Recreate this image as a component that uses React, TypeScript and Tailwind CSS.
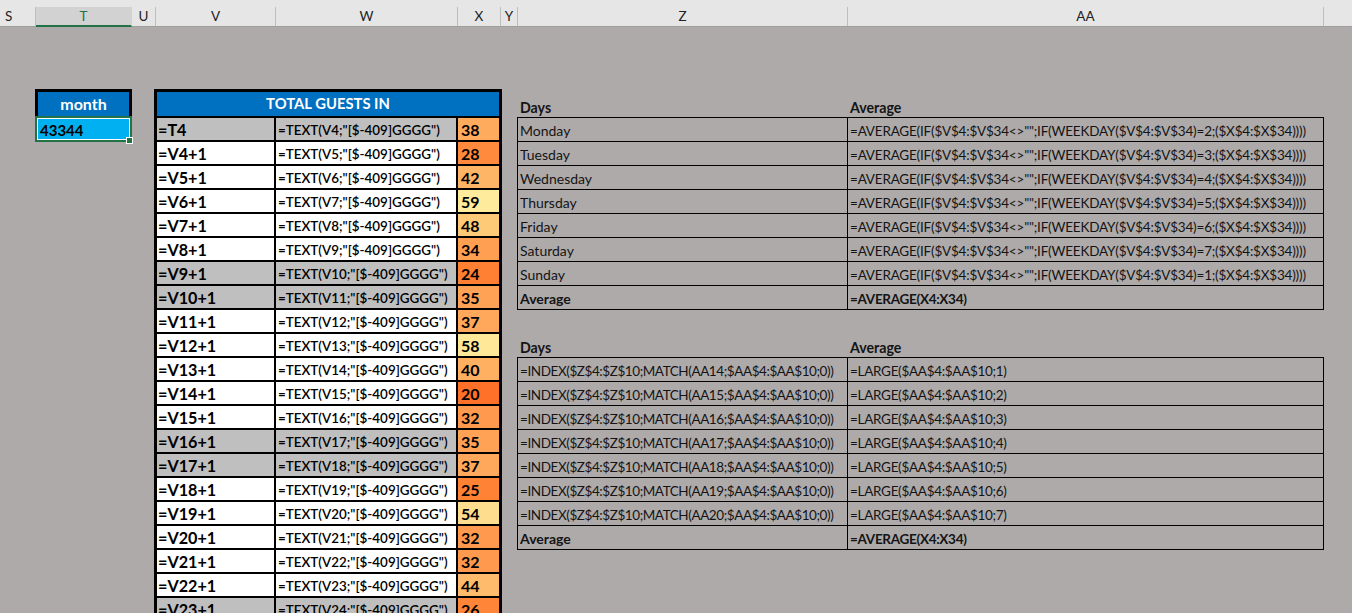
const cols = [
  { l: "S", w: "w-[36px] justify-start pl-[5px]" },
  { l: "T", w: "w-[96px] justify-center", sel: true },
  { l: "U", w: "w-[24px] justify-center" },
  { l: "V", w: "w-[120px] justify-center" },
  { l: "W", w: "w-[182px] justify-center" },
  { l: "X", w: "w-[43px] justify-center" },
  { l: "Y", w: "w-[17px] justify-center" },
  { l: "Z", w: "w-[330px] justify-center" },
  { l: "AA", w: "w-[476px] justify-center" },
];

const guests = [
  { a: "=T4", g: true, n: 38, c: "bg-[#ffab5e]" },
  { a: "=V4+1", n: 28, c: "bg-[#ff8a3d]" },
  { a: "=V5+1", n: 42, c: "bg-[#ffb566]" },
  { a: "=V6+1", n: 59, c: "bg-[#ffeb9c]" },
  { a: "=V7+1", n: 48, c: "bg-[#ffca78]" },
  { a: "=V8+1", n: 34, c: "bg-[#ff9f52]" },
  { a: "=V9+1", g: true, n: 24, c: "bg-[#ff7f33]" },
  { a: "=V10+1", g: true, n: 35, c: "bg-[#ffa255]" },
  { a: "=V11+1", n: 37, c: "bg-[#ffa85b]" },
  { a: "=V12+1", n: 58, c: "bg-[#ffe898]" },
  { a: "=V13+1", n: 40, c: "bg-[#ffb061]" },
  { a: "=V14+1", n: 20, c: "bg-[#ff7128]" },
  { a: "=V15+1", n: 32, c: "bg-[#ff994d]" },
  { a: "=V16+1", g: true, n: 35, c: "bg-[#ffa255]" },
  { a: "=V17+1", g: true, n: 37, c: "bg-[#ffa85b]" },
  { a: "=V18+1", n: 25, c: "bg-[#ff8235]" },
  { a: "=V19+1", n: 54, c: "bg-[#ffdd8e]" },
  { a: "=V20+1", n: 32, c: "bg-[#ff994d]" },
  { a: "=V21+1", n: 32, c: "bg-[#ff994d]" },
  { a: "=V22+1", n: 44, c: "bg-[#ffbb6c]" },
  { a: "=V23+1", g: true, n: 26, c: "bg-[#ff8538]" },
];

const days = ["Monday", "Tuesday", "Wednesday", "Thursday", "Friday", "Saturday", "Sunday"];
const weekday = [2, 3, 4, 5, 6, 7, 1];

function Row({ a, b, bold, aClass = "", bClass = "" }: { a: string; b: string; bold?: boolean; aClass?: string; bClass?: string }) {
  return (
    <div className={`flex h-[24px] border-b border-black ${bold ? "font-bold" : ""}`}>
      <div className={`w-[330px] shrink-0 border-r border-black pl-[2px] leading-[26px] whitespace-nowrap overflow-hidden ${aClass}`}>{a}</div>
      <div className={`flex-1 pl-[2px] leading-[26px] whitespace-nowrap overflow-hidden ${bClass}`}>{b}</div>
    </div>
  );
}

function Heading() {
  return (
    <div className="flex h-[20px] font-bold leading-[21px] text-[14.2px]">
      <div className="w-[330px] shrink-0 pl-[3px]">Days</div>
      <div className="pl-[3px]">Average</div>
    </div>
  );
}

export default function App() {
  return (
    <div className="h-[613px] w-[1352px] overflow-hidden bg-[#aeaaaa] font-['Lato','Liberation_Sans',sans-serif] text-black">
      <div className="flex h-[27px] bg-[#e6e6e6] border-b border-[#9f9f9f]">
        {cols.map((c) => (
          <div
            key={c.l}
            className={`${c.w} shrink-0 mt-[7px] flex items-center text-[13.5px] border-r ${
              c.sel
                ? "bg-[#d2d2d2] border-[#d2d2d2] text-[#217346] h-[20px] border-b-2 border-b-[#217346]"
                : "h-[19px] border-[#bdbdbd] text-[#222]"
            }`}
          >
            {c.l}
          </div>
        ))}
      </div>

      <div className="flex items-start pt-[62px]">
        <div className="ml-[35px] w-[97px] shrink-0 relative">
          <div className="border-[3px] border-b-0 border-black bg-[#0070c0] h-[27px] flex items-center justify-center text-white font-bold text-[16px]">
            month
          </div>
          <div className="relative border-2 border-[#217346] h-[26px]">
            <div className="h-full border border-white bg-[#00b0f0] pl-[2px] font-bold text-[15px] leading-[22px]">43344</div>
            <div className="absolute -right-[3px] -bottom-[4px] w-[7px] h-[7px] bg-[#217346] border border-white" />
          </div>
        </div>

        <div className="ml-[22px] w-[348px] shrink-0 border-[3px] border-black">
          <div className="h-[24px] bg-[#0070c0] text-white font-bold text-[14.8px] leading-[23px] text-center">
            TOTAL GUESTS IN
          </div>
          {guests.map((r, i) => (
            <div key={r.a} className="flex h-[24px] border-t-2 border-black">
              <div className={`w-[117px] shrink-0 pl-[1px] font-bold text-[16.2px] leading-[23px] ${r.g ? "bg-[#bfbfbf]" : "bg-white"}`}>{r.a}</div>
              <div className={`w-[184px] shrink-0 border-x-2 border-black pl-[2px] text-[13.4px] leading-[25px] font-semibold whitespace-nowrap ${r.g ? "bg-[#bfbfbf]" : "bg-white"}`}>
                {`=TEXT(V${i + 4};"[$-409]GGGG")`}
              </div>
              <div className={`flex-1 pl-[3px] font-bold text-[16px] leading-[23px] ${r.c}`}>{r.n}</div>
            </div>
          ))}
        </div>

        <div className="ml-[15px] w-[807px] shrink-0 pt-[8px] text-[14px] text-[#141414]">
          <Heading />
          <div className="border-l border-r border-t border-black">
            {days.map((d, i) => (
              <Row
                key={d}
                a={d}
                b={`=AVERAGE(IF($V$4:$V$34<>"";IF(WEEKDAY($V$4:$V$34)=${weekday[i]};($X$4:$X$34))))`}
                bClass="text-[13.5px] tracking-[-0.2px]"
              />
            ))}
            <Row a="Average" b="=AVERAGE(X4:X34)" bold bClass="text-[13.5px] tracking-[-0.3px]" />
          </div>
          <div className="h-[27px]" />
          <Heading />
          <div className="border-l border-r border-t border-black">
            {days.map((_, i) => (
              <Row
                key={i}
                a={`=INDEX($Z$4:$Z$10;MATCH(AA${14 + i};$AA$4:$AA$10;0))`}
                b={`=LARGE($AA$4:$AA$10;${i + 1})`}
                aClass="text-[13.5px] tracking-[-0.42px]"
                bClass="text-[13.5px] tracking-[-0.3px]"
              />
            ))}
            <Row a="Average" b="=AVERAGE(X4:X34)" bold bClass="text-[13.5px] tracking-[-0.3px]" />
          </div>
        </div>
      </div>
    </div>
  );
}
